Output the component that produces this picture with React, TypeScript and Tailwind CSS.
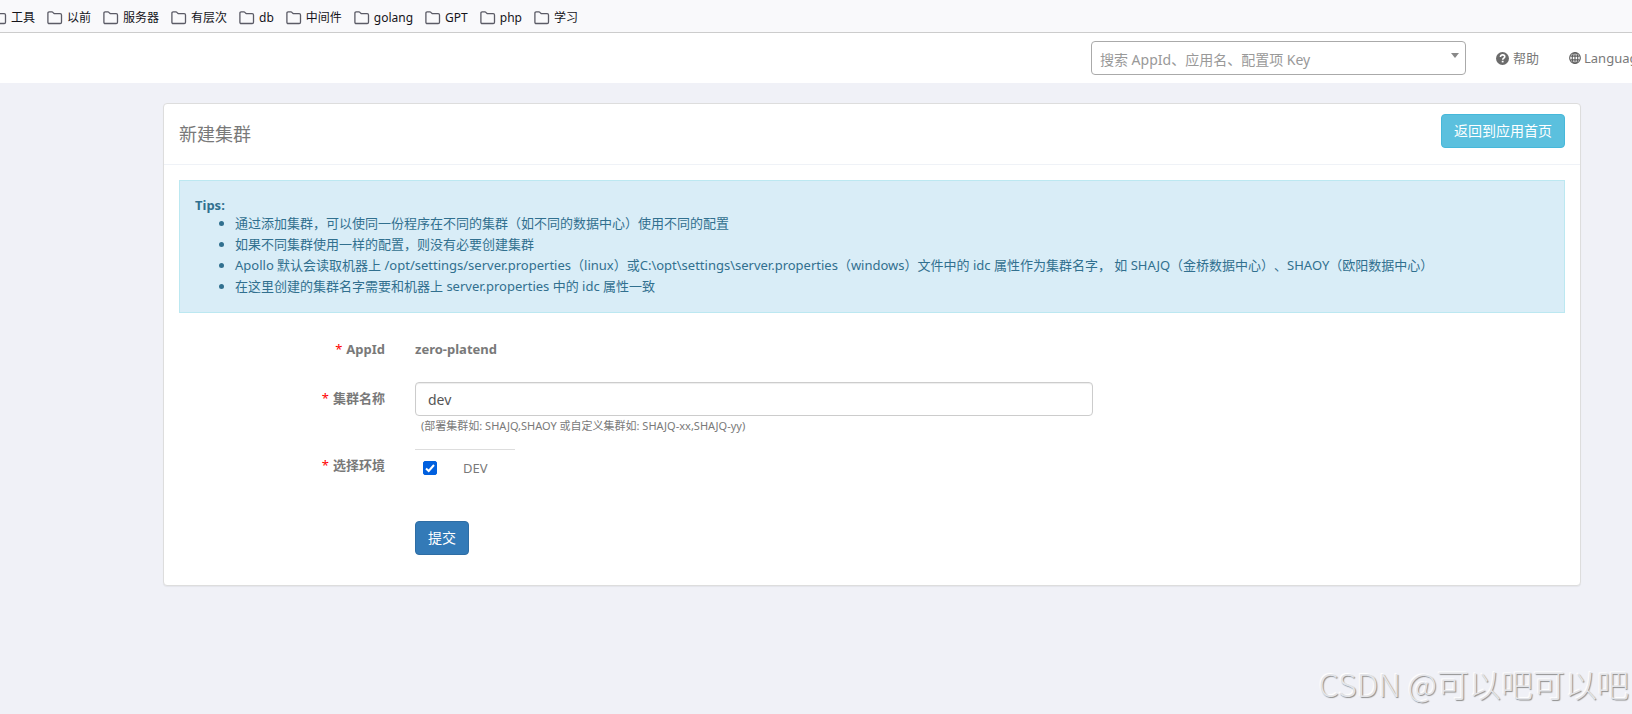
import React, { useState } from "react";

const bookmarks = ["工具", "以前", "服务器", "有层次", "db", "中间件", "golang", "GPT", "php", "学习"];

const tips = [
  "通过添加集群，可以使同一份程序在不同的集群（如不同的数据中心）使用不同的配置",
  "如果不同集群使用一样的配置，则没有必要创建集群",
  "Apollo 默认会读取机器上 /opt/settings/server.properties（linux）或C:\\opt\\settings\\server.properties（windows）文件中的 idc 属性作为集群名字， 如 SHAJQ（金桥数据中心）、SHAOY（欧阳数据中心）",
  "在这里创建的集群名字需要和机器上 server.properties 中的 idc 属性一致",
];

function FolderIcon() {
  return (
    <svg width="16" height="14" viewBox="0 0 16 14" fill="none" stroke="#5b5b66" strokeWidth="1.3" aria-hidden="true">
      <path d="M0.9 11.2V2.2Q0.9 0.9 2.2 0.9H4.9Q5.5 0.9 5.9 1.4L6.8 2.3Q7.2 2.7 7.8 2.7H13.2Q14.5 2.7 14.5 4V11.2Q14.5 12.5 13.2 12.5H2.2Q0.9 12.5 0.9 11.2Z" />
    </svg>
  );
}

function HelpIcon() {
  return (
    <svg width="13" height="13" viewBox="0 0 12 12" aria-hidden="true">
      <circle cx="6" cy="6" r="6" fill="#6b6b6b" />
      <path d="M4.1 4.6C4.1 3.2 5 2.6 6.1 2.6S8.1 3.3 8.1 4.4C8.1 5.7 6.2 5.7 6.2 7.2" fill="none" stroke="#fff" strokeWidth="1.5" />
      <rect x="5.3" y="8.1" width="1.7" height="1.5" fill="#fff" />
    </svg>
  );
}

function GlobeIcon() {
  return (
    <svg width="12" height="12" viewBox="0 0 13 13" fill="none" stroke="#5f5f5f" strokeWidth="1.2" aria-hidden="true">
      <circle cx="6.5" cy="6.5" r="5.8" />
      <ellipse cx="6.5" cy="6.5" rx="3" ry="5.7" />
      <path d="M6.5 0.8V12.2M1.5 4.5H11.5M1.5 8.5H11.5" />
    </svg>
  );
}

function Required() {
  return <span className="mr-1 font-normal text-[#ff0000]">*</span>;
}

const labelClass = "col-span-2 pr-[15px] text-right font-bold";

export default function App() {
  const [name, setName] = useState("dev");
  const [checked, setChecked] = useState(true);

  return (
    <div className="relative min-h-screen overflow-hidden bg-[#f0f1f7] font-['Noto_Sans','Noto_Sans_CJK_SC',sans-serif] text-[13px] leading-5 text-[#797979] [text-spacing-trim:space-all]">
      <nav aria-label="Bookmarks" className="h-[33px] border-b border-[#cccccc] bg-[#f9f9fb] pt-2">
        <ul className="-ml-[9px] flex gap-3 text-xs leading-5 text-[#15141a]">
          {bookmarks.map((b) => (
            <li key={b} className="shrink-0">
              <a href="#" className="flex items-center gap-1">
                <FolderIcon />
                {b}
              </a>
            </li>
          ))}
        </ul>
      </nav>

      <header className="flex h-[50px] items-start justify-end bg-white pt-2 whitespace-nowrap">
        <div className="relative w-[375px] shrink-0">
          <select
            aria-label="搜索"
            defaultValue=""
            className="h-[34px] w-full appearance-none rounded border border-[#aaaaaa] bg-white px-2 pt-1 text-sm text-[#999999]"
          >
            <option value="">搜索 AppId、应用名、配置项 Key</option>
          </select>
          <svg width="8" height="5" viewBox="0 0 8 5" className="pointer-events-none absolute top-3 right-[7px]" aria-hidden="true">
            <path d="M0 0H8L4 5Z" fill="#888" />
          </svg>
        </div>
        <a href="#" className="ml-[30px] flex h-[34px] shrink-0 items-center gap-1">
          <HelpIcon />
          帮助
        </a>
        <a href="#" className="ml-[30px] flex h-[34px] w-[63px] shrink-0 items-center gap-[3px]">
          <span className="shrink-0">
            <GlobeIcon />
          </span>
          Language
        </a>
      </header>

      <main className="pt-5 pr-[51px] pb-32 pl-[163px]">
        <section className="rounded border border-[#dddddd] bg-white pb-[30px] shadow-[0_1px_1px_rgba(0,0,0,0.05)]">
          <div className="flex items-start justify-between border-b border-[#eff2f7] px-[15px] pt-[10px] pb-[16px]">
            <h1 className="pt-2 text-lg leading-6">新建集群</h1>
            <a
              href="#"
              className="flex h-[34px] items-center rounded border border-[#46b8da] bg-[#5bc0de] px-3 text-sm text-white"
            >
              返回到应用首页
            </a>
          </div>

          <div className="mx-[15px] mt-[15px] border border-[#bce8f1] bg-[#d9edf7] px-[15px] pt-4 pb-[15px] text-[#31708f]">
            <strong className="block leading-4">Tips:</strong>
            <ul className="list-disc pl-10 leading-[21px]">
              {tips.map((t) => (
                <li key={t}>{t}</li>
              ))}
            </ul>
          </div>

          <form onSubmit={(e) => e.preventDefault()}>
            <div className="mt-[26px] grid grid-cols-12">
              <div className={labelClass}>
                <Required />
                AppId
              </div>
              <div className="col-span-6 px-[15px] font-bold">zero-platend</div>
            </div>

            <div className="mt-[23px] grid grid-cols-12">
              <label htmlFor="cluster" className={`${labelClass} pt-[6px]`}>
                <Required />
                集群名称
              </label>
              <div className="col-span-6 px-[15px]">
                <input
                  id="cluster"
                  type="text"
                  value={name}
                  onChange={(e) => setName(e.target.value)}
                  className="block h-[34px] w-full rounded border border-[#cccccc] bg-white px-3 text-sm text-[#555555] shadow-[inset_0_1px_1px_rgba(0,0,0,0.075)] outline-none"
                />
                <small className="block pl-[6px] text-[11px] leading-5">
                  (部署集群如: SHAJQ,SHAOY 或自定义集群如: SHAJQ-xx,SHAJQ-yy)
                </small>
              </div>
            </div>

            <div className="mt-[13px] grid grid-cols-12">
              <div className={`${labelClass} pt-[6px]`}>
                <Required />
                选择环境
              </div>
              <div className="col-span-6 px-[15px]">
                <div className="flex w-[100px] items-center gap-[26px] border-t border-[#dddddd] px-2 pt-2">
                  <input
                    id="env-dev"
                    type="checkbox"
                    checked={checked}
                    onChange={(e) => setChecked(e.target.checked)}
                    className="h-[14px] w-[14px] appearance-none rounded-xs border border-[#8f8f9d] bg-white bg-center bg-no-repeat checked:border-[#0060df] checked:bg-[#0060df] checked:bg-[url('data:image/svg+xml,%3Csvg%20xmlns=%22http://www.w3.org/2000/svg%22%20width=%2212%22%20height=%2212%22%3E%3Cpath%20d=%22M2%206.5L4.7%209L10%203%22%20fill=%22none%22%20stroke=%22white%22%20stroke-width=%222%22/%3E%3C/svg%3E')]"
                  />
                  <label htmlFor="env-dev">DEV</label>
                </div>
              </div>
            </div>

            <div className="mt-[43px] grid grid-cols-12">
              <div className="col-span-6 col-start-3 px-[15px]">
                <button
                  type="submit"
                  className="h-[34px] rounded border border-[#2e6da4] bg-[#337ab7] px-3 text-sm text-white"
                >
                  提交
                </button>
              </div>
            </div>
          </form>
        </section>
      </main>

      <div className="pointer-events-none absolute right-[3px] bottom-[11px] font-['Noto_Sans_CJK_SC',sans-serif] text-[32px] leading-10 font-light whitespace-nowrap text-[#e3e4e8] [text-shadow:1px_1px_1px_#8d8d8d,-1px_-1px_1px_#ffffff]">
        CSDN @可以吧可以吧
      </div>
    </div>
  );
}
